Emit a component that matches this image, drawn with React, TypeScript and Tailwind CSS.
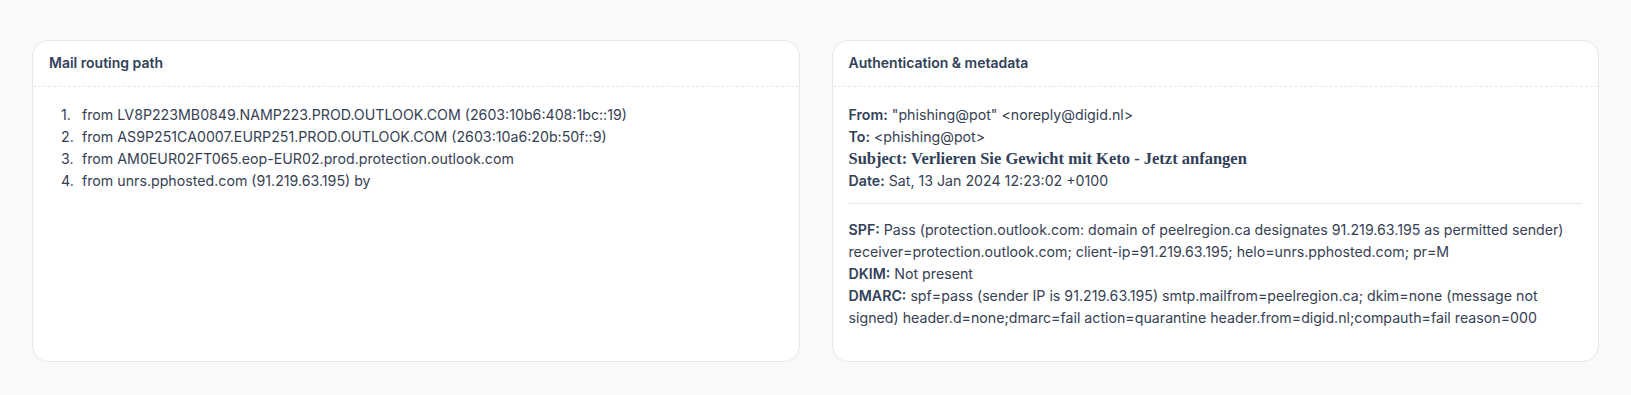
const HOPS = [
  "from LV8P223MB0849.NAMP223.PROD.OUTLOOK.COM (2603:10b6:408:1bc::19)",
  "from AS9P251CA0007.EURP251.PROD.OUTLOOK.COM (2603:10a6:20b:50f::9)",
  "from AM0EUR02FT065.eop-EUR02.prod.protection.outlook.com",
  "from unrs.pphosted.com (91.219.63.195) by",
];

function Card({ title, children }: { title: string; children: React.ReactNode }) {
  return (
    <div className="min-h-[322px] rounded-2xl border border-gray-200 bg-white">
      <div className="border-b border-dashed border-gray-200 px-4 pt-[13px] pb-[14px] text-sm leading-[18px] font-semibold text-slate-700">
        {title}
      </div>
      <div className="px-4 pt-[17px] pb-4 text-[14.2px] leading-[22px] text-gray-700">{children}</div>
    </div>
  );
}

export default function App() {
  return (
    <div
      className="min-h-screen w-full bg-[#f9f9f9] px-8 pt-10 pb-8"
      style={{ fontFamily: "Inter, 'Noto Sans', sans-serif" }}
    >
      <div className="grid grid-cols-2 gap-8">
        <Card title="Mail routing path">
          <ol className="pl-3">
            {HOPS.map((h, i) => (
              <li key={h} className="flex">
                <span className="w-[21px] shrink-0">{i + 1}.</span>
                <span>{h}</span>
              </li>
            ))}
          </ol>
        </Card>

        <Card title="Authentication & metadata">
          <div>
            <span className="font-semibold text-slate-700">From:</span> "phishing@pot" &lt;noreply@digid.nl&gt;
          </div>
          <div>
            <span className="font-semibold text-slate-700">To:</span> &lt;phishing@pot&gt;
          </div>
          <div
            className="text-[16.5px] font-bold text-slate-700"
            style={{ fontFamily: "'Liberation Serif', serif" }}
          >
            Subject: Verlieren Sie Gewicht mit Keto - Jetzt anfangen
          </div>
          <div>
            <span className="font-semibold text-slate-700">Date:</span> Sat, 13 Jan 2024 12:23:02 +0100
          </div>

          <hr className="mt-[11px] mb-[15px] border-gray-200" />

          <div>
            <span className="font-semibold text-slate-700">SPF:</span> Pass (protection.outlook.com: domain of
            peelregion.ca designates 91.219.63.195 as permitted sender) receiver=protection.outlook.com;
            client-ip=91.219.63.195; helo=unrs.pphosted.com; pr=M
          </div>
          <div>
            <span className="font-semibold text-slate-700">DKIM:</span> Not present
          </div>
          <div>
            <span className="font-semibold text-slate-700">DMARC:</span> spf=pass (sender IP is 91.219.63.195)
            smtp.mailfrom=peelregion.ca; dkim=none (message not signed)
            header.d=none;dmarc=fail action=quarantine header.from=digid.nl;compauth=fail reason=000
          </div>
        </Card>
      </div>
    </div>
  );
}
